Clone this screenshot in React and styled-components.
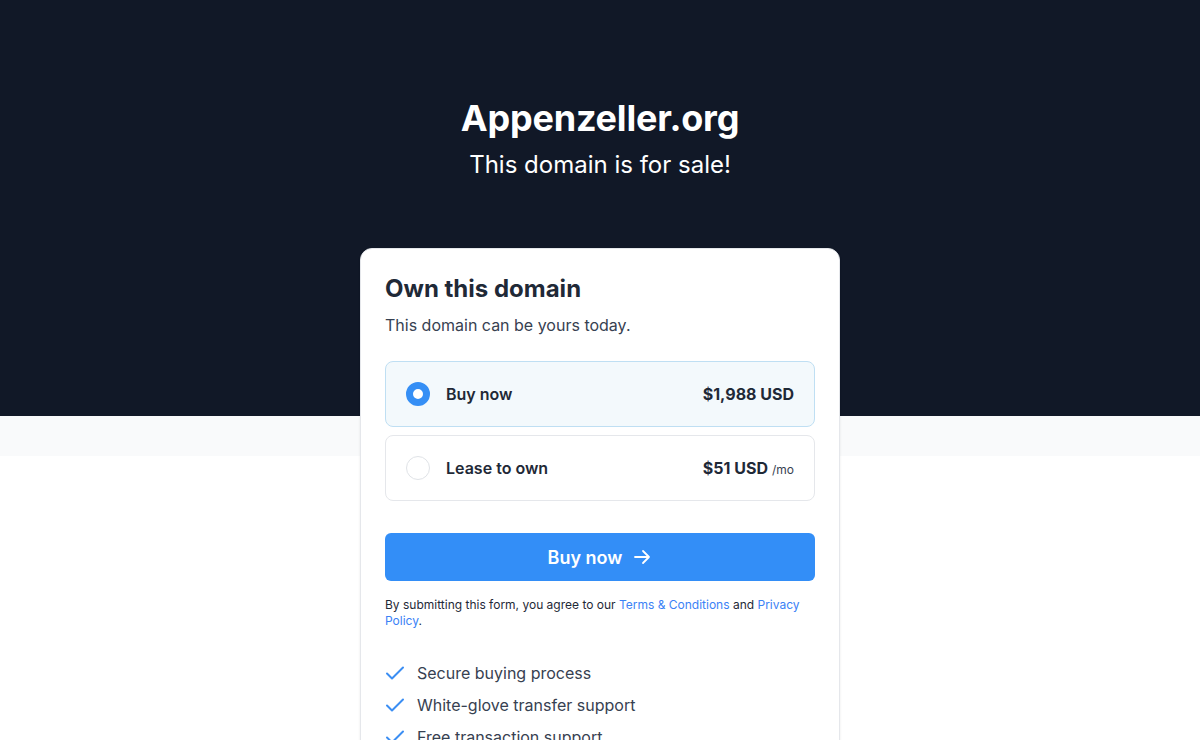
import React, { useState } from "react";
import styled, { createGlobalStyle } from "styled-components";

const GlobalStyle = createGlobalStyle`
  * { box-sizing: border-box; }
  html, body { margin: 0; padding: 0; }
  body {
    font-family: Inter, "Noto Sans", "Liberation Sans", sans-serif;
    background: #ffffff;
    color: #1f2937;
    -webkit-font-smoothing: antialiased;
  }
`;

const Page = styled.div`
  min-height: 740px;
`;

const Hero = styled.header`
  background: #111827;
  height: 416px;
  padding-top: 98px;
  text-align: center;
  color: #ffffff;
`;

const DomainName = styled.h1`
  margin: 0;
  font-size: 36px;
  line-height: 40px;
  font-weight: 700;
  letter-spacing: -0.2px;
`;

const Tagline = styled.p`
  margin: 11px 0 0;
  font-size: 24px;
  line-height: 32px;
  font-weight: 400;
`;

const Body = styled.main`
  background: linear-gradient(#f9fafb 0 40px, #ffffff 40px);
  display: flex;
  justify-content: center;
  padding-bottom: 40px;
`;

const Card = styled.section`
  position: relative;
  z-index: 1;
  width: 480px;
  margin-top: -168px;
  background: #ffffff;
  border: 1px solid #e5e7eb;
  border-radius: 12px;
  padding: 24px;
  box-shadow: 0 1px 3px rgba(0, 0, 0, 0.06), 0 1px 2px rgba(0, 0, 0, 0.04);
`;

const CardTitle = styled.h2`
  margin: 0;
  font-size: 24px;
  line-height: 32px;
  font-weight: 700;
  color: #1f2937;
`;

const CardSub = styled.p`
  margin: 8px 0 0;
  font-size: 16px;
  line-height: 24px;
  color: #374151;
`;

const Options = styled.div`
  margin-top: 24px;
  display: flex;
  flex-direction: column;
  gap: 8px;
`;

const Option = styled.label`
  display: flex;
  align-items: center;
  gap: 16px;
  height: 66px;
  padding: 0 20px;
  border-radius: 8px;
  border: 1px solid ${(p) => (p.$active ? "#bfdff3" : "#e5e7eb")};
  background: ${(p) => (p.$active ? "#f3f9fc" : "#ffffff")};
  cursor: pointer;
`;

const Radio = styled.span`
  width: 24px;
  height: 24px;
  border-radius: 50%;
  flex: none;
  background: #ffffff;
  border: ${(p) => (p.$checked ? "7px solid #358ff5" : "1.5px solid #e0e3e7")};
`;

const OptionLabel = styled.span`
  flex: 1;
  font-size: 16px;
  line-height: 24px;
  font-weight: 600;
  color: #1f2937;
`;

const Price = styled.span`
  display: flex;
  align-items: baseline;
  font-size: 16px;
  line-height: 24px;
  font-weight: 700;
  color: #1f2937;
`;

const Per = styled.span`
  font-size: 12px;
  line-height: 1;
  font-weight: 400;
  color: #374151;
  margin-left: 4px;
`;

const BuyButton = styled.button`
  margin-top: 32px;
  width: 100%;
  height: 48px;
  border: none;
  border-radius: 6px;
  background: #338ef7;
  color: #ffffff;
  font-family: inherit;
  font-size: 18px;
  font-weight: 600;
  display: flex;
  align-items: center;
  justify-content: center;
  gap: 10px;
  cursor: pointer;
`;

const Terms = styled.p`
  margin: 16px 0 0;
  font-size: 12px;
  line-height: 16px;
  color: #1f2937;
`;

const TermsLink = styled.a`
  color: #3b82f6;
  text-decoration: none;
`;

const Checklist = styled.ul`
  list-style: none;
  margin: 32px 0 0;
  padding: 0;
  display: flex;
  flex-direction: column;
  gap: 8px;
`;

const CheckItem = styled.li`
  display: flex;
  align-items: center;
  gap: 12px;
  font-size: 16px;
  line-height: 24px;
  color: #374151;
`;

const CheckIcon = () => (
  <svg width="20" height="20" viewBox="0 0 20 20" fill="none">
    <path d="M2 10.5l5 5L18 4.5" stroke="#3b8ef3" strokeWidth="2" strokeLinecap="round" strokeLinejoin="round" />
  </svg>
);

const ArrowIcon = () => (
  <svg width="20" height="20" viewBox="0 0 20 20" fill="none">
    <path d="M3 10h14M11 4l6 6-6 6" stroke="#ffffff" strokeWidth="1.8" strokeLinecap="round" strokeLinejoin="round" />
  </svg>
);

const options = [
  { id: "buy", label: "Buy now", price: "$1,988 USD" },
  { id: "lease", label: "Lease to own", price: "$51 USD", per: "/mo" },
];

const perks = ["Secure buying process", "White-glove transfer support", "Free transaction support"];

export default function App() {
  const [choice, setChoice] = useState("buy");
  return (
    <Page>
      <GlobalStyle />
      <Hero>
        <DomainName>Appenzeller.org</DomainName>
        <Tagline>This domain is for sale!</Tagline>
      </Hero>
      <Body>
        <Card>
          <CardTitle>Own this domain</CardTitle>
          <CardSub>This domain can be yours today.</CardSub>
          <Options>
            {options.map((o) => (
              <Option key={o.id} $active={choice === o.id} onClick={() => setChoice(o.id)}>
                <Radio $checked={choice === o.id} />
                <OptionLabel>{o.label}</OptionLabel>
                <Price>
                  {o.price}
                  {o.per && <Per>{o.per}</Per>}
                </Price>
              </Option>
            ))}
          </Options>
          <BuyButton>
            Buy now <ArrowIcon />
          </BuyButton>
          <Terms>
            By submitting this form, you agree to our <TermsLink href="#">Terms &amp; Conditions</TermsLink> and{" "}
            <TermsLink href="#">Privacy Policy</TermsLink>.
          </Terms>
          <Checklist>
            {perks.map((p) => (
              <CheckItem key={p}>
                <CheckIcon />
                {p}
              </CheckItem>
            ))}
          </Checklist>
        </Card>
      </Body>
    </Page>
  );
}
